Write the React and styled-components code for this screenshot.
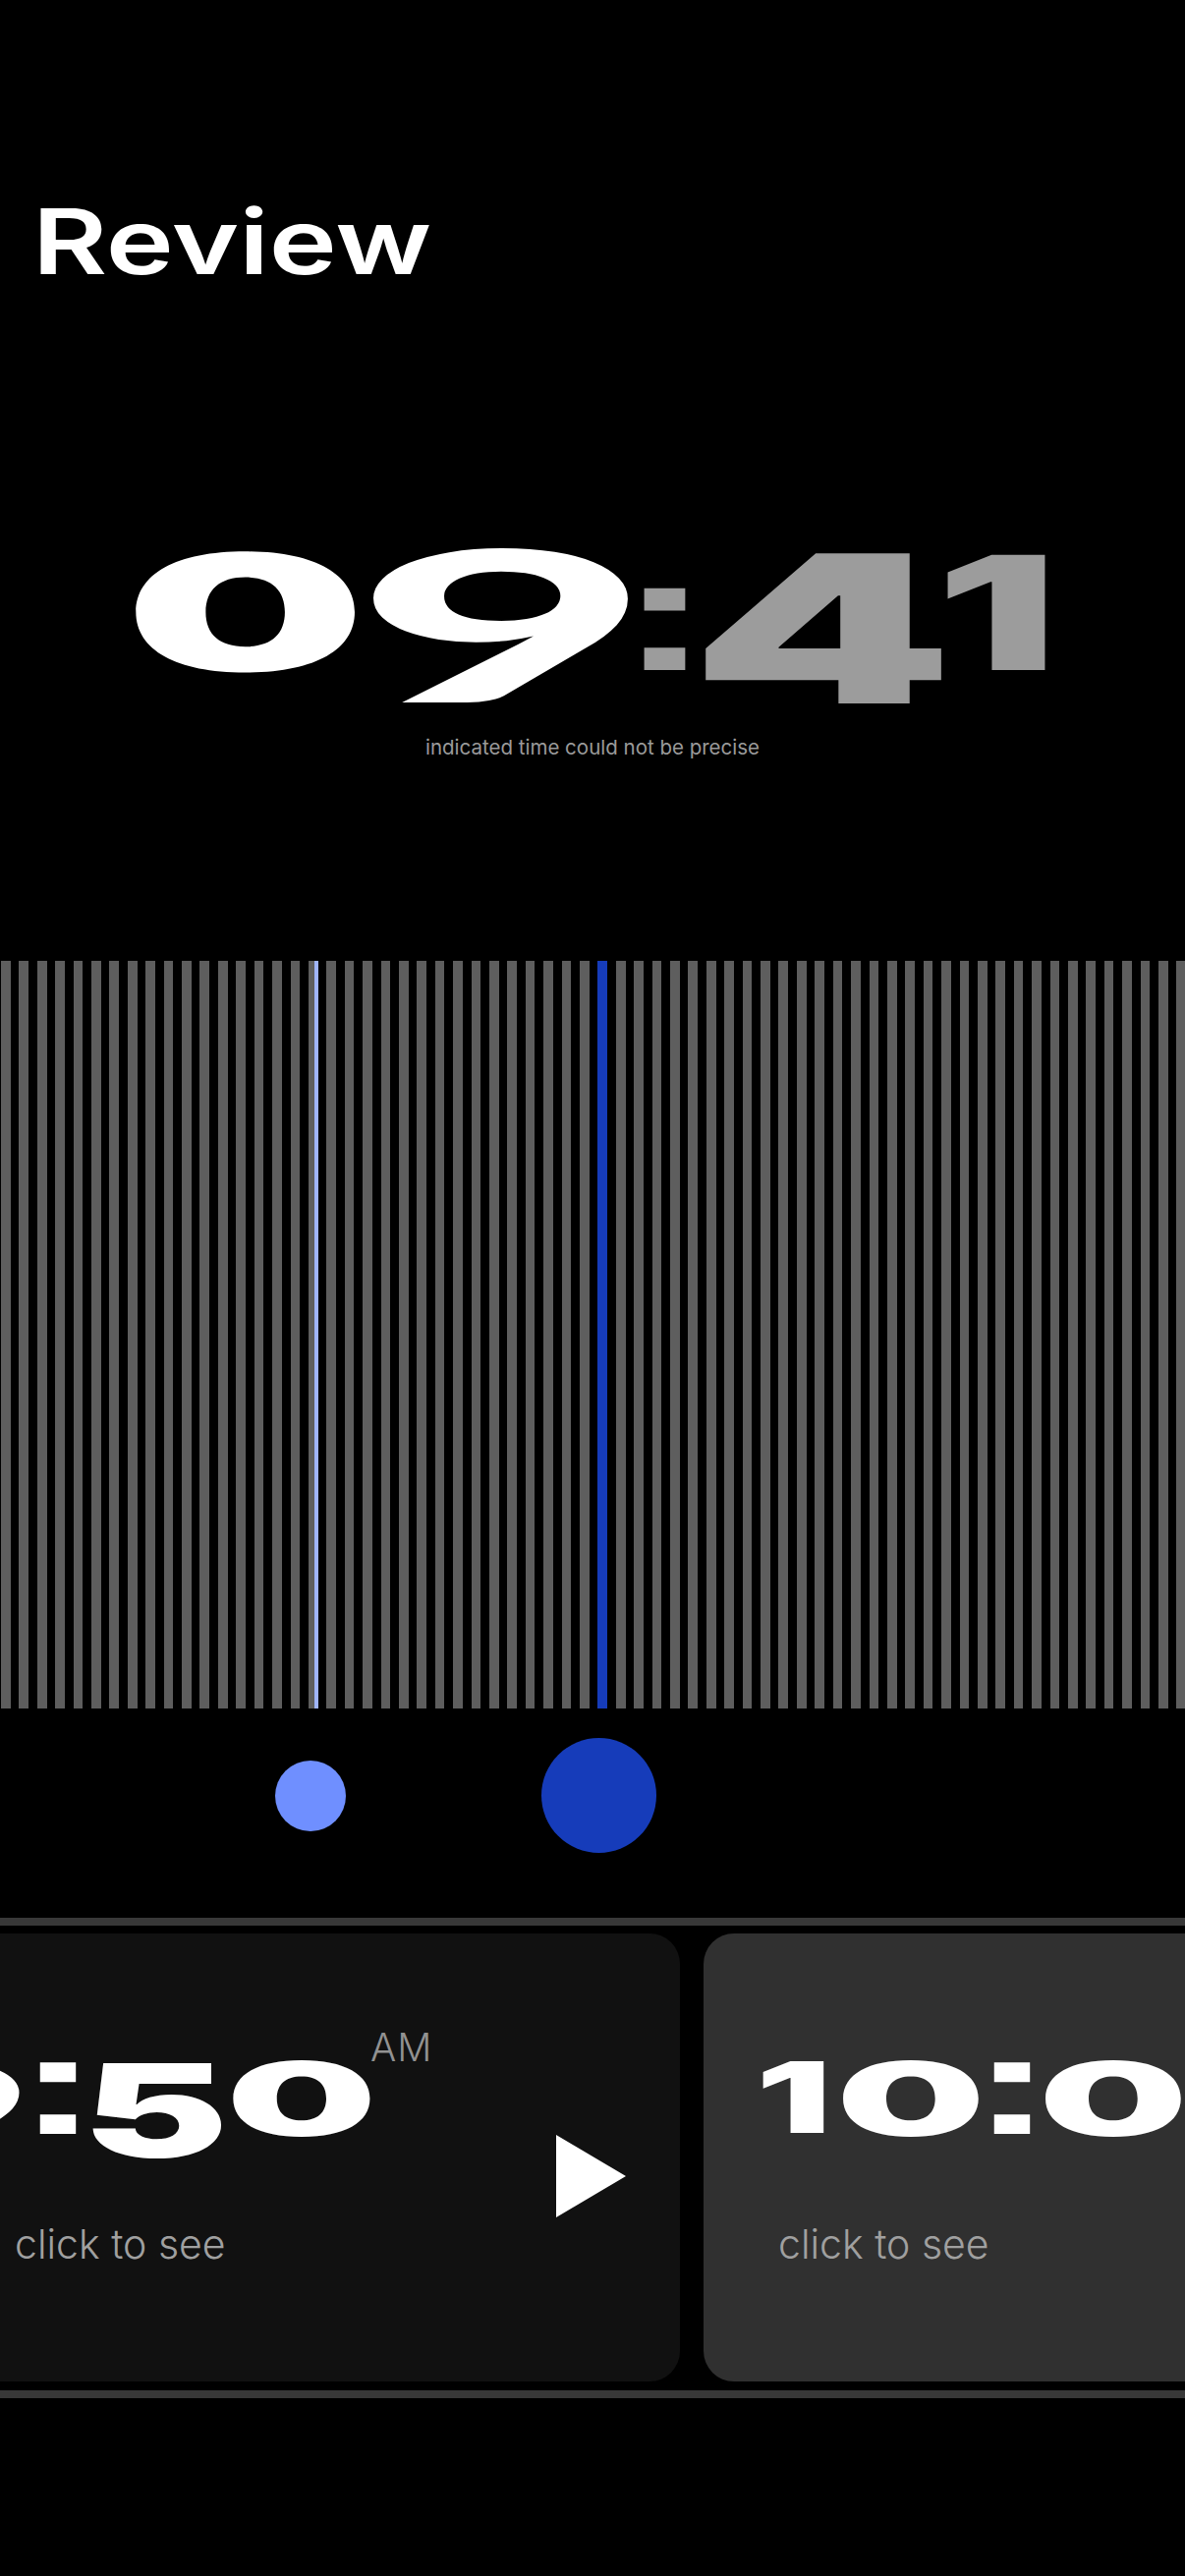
import React from "react";
import styled, { createGlobalStyle } from "styled-components";

const FONT = `Inter, "Liberation Sans", sans-serif`;
const COLON_FONT = `"Liberation Sans", Arial, sans-serif`;
const NINE_FONT = `Lato, Inter, sans-serif`;

const bars = Array.from({ length: 66 }, (_, i) => i);

const bigClock = [
  { ch: "0", left: 137, width: 226, size: 165, scale: 2.1, top: 1 },
  { ch: "9", left: 19, width: 260, size: 214, scale: 2.44, top: -14, font: NINE_FONT },
  { ch: ":", left: 12, width: 44, size: 165, scale: 1.8, top: 3, dim: true, font: COLON_FONT },
  { ch: "4", left: 18, width: 242, size: 210, scale: 1.82, top: -5, dim: true },
  { ch: "1", left: 4, width: 104, size: 161, scale: 1.7, top: 3, dim: true },
];

const morning = [
  { ch: "9", left: -146, width: 150, size: 130, scale: 2.4, top: 19, font: NINE_FONT },
  { ch: ":", left: 21, width: 38, size: 144, scale: 1.8, top: -9, font: COLON_FONT },
  { ch: "5", left: 12, width: 135, size: 132, scale: 1.7, top: 22 },
  { ch: "0", left: 11, width: 141, size: 104, scale: 2.08, top: 24 },
];

const late = [
  { ch: "1", left: -17, width: 65, size: 100, scale: 1.7, top: 25 },
  { ch: "0", left: 17, width: 139, size: 104, scale: 2.06, top: 24 },
  { ch: ":", left: 15, width: 38, size: 144, scale: 1.8, top: -9, font: COLON_FONT },
  { ch: "0", left: 14, width: 140, size: 104, scale: 2.06, top: 24 },
];

const Digits = ({ items }) =>
  items.map((d, i) => (
    <Cell key={i} $left={d.left} $width={d.width} $top={d.top}>
      <Ink $size={d.size} $scale={d.scale} $dim={d.dim} $font={d.font}>
        {d.ch}
      </Ink>
    </Cell>
  ));

const App = () => {
  return (
    <Page>
      <GlobalStyle />
      <Title>Review</Title>

      <ClockRow>
        <Digits items={bigClock} />
      </ClockRow>
      <Caption>indicated time could not be precise</Caption>

      <Bars>
        {bars.map((i) => (
          <Bar key={i} $kind={i === 17 ? "marker" : i === 33 ? "active" : ""} />
        ))}
      </Bars>

      <Dots>
        <Dot $size={72} $color="#6f8fff" />
        <Dot $size={117} $color="#163cba" />
      </Dots>

      <Rail $top={66} />
      <Cards>
        <Card $width={753} $bg="#111111">
          <CardBody>
            <TimeRow>
              <Digits items={morning} />
              <Meridiem>AM</Meridiem>
            </TimeRow>
            <Note>click to see</Note>
          </CardBody>
          <Play viewBox="0 0 71 84">
            <polygon points="0,0 71,42 0,84" fill="#fff" />
          </Play>
        </Card>
        <Card $width={760} $bg="#303030">
          <CardBody>
            <TimeRow>
              <Digits items={late} />
            </TimeRow>
            <Note>click to see</Note>
          </CardBody>
        </Card>
      </Cards>
      <Rail />
    </Page>
  );
};

export default App;

/* ================= styled-components ================= */

const GlobalStyle = createGlobalStyle`
  html, body {
    margin: 0;
    background: #000;
    overflow: hidden;
  }
`;

const Page = styled.div`
  width: 1206px;
  height: 2622px;
  padding-top: 200px;
  box-sizing: border-box;
  background: #000;
  font-family: ${FONT};
  overflow: hidden;
`;

const Title = styled.h1`
  margin: 0 0 0 33px;
  font-size: 92px;
  line-height: 1;
  font-weight: 600;
  color: #fff;
  transform: scaleX(1.27);
  transform-origin: left center;
`;

const ClockRow = styled.div`
  display: flex;
  align-items: flex-start;
  height: 200px;
  margin-top: 248px;
`;

const Cell = styled.div`
  flex: none;
  display: flex;
  justify-content: center;
  width: ${({ $width }) => $width}px;
  margin-left: ${({ $left }) => $left}px;
  margin-top: ${({ $top }) => $top}px;
`;

const Ink = styled.span`
  display: block;
  font-family: ${({ $font }) => $font || FONT};
  font-size: ${({ $size }) => $size}px;
  line-height: 1;
  font-weight: 900;
  color: ${({ $dim }) => ($dim ? "#9c9c9c" : "#fff")};
  transform: scaleX(${({ $scale }) => $scale});
`;

const Caption = styled.p`
  margin: 9px 0 0;
  text-align: center;
  font-size: 20.5px;
  line-height: 24px;
  color: #9a9a9a;
`;

const Bars = styled.div`
  display: flex;
  gap: 8.72px;
  height: 761px;
  margin-top: 205px;
  padding-left: 1px;
`;

const barFill = {
  marker: "linear-gradient(90deg, #5e5e5e 6px, #9fb4fb 6px)",
  active: "#163cba",
};

const Bar = styled.div`
  flex: none;
  width: 9.7px;
  background: ${({ $kind }) => barFill[$kind] || "#5e5e5e"};
`;

const Dots = styled.div`
  display: flex;
  align-items: center;
  gap: 199px;
  height: 117px;
  margin-top: 30px;
  padding-left: 280px;
`;

const Dot = styled.div`
  flex: none;
  width: ${({ $size }) => $size}px;
  height: ${({ $size }) => $size}px;
  border-radius: 50%;
  background: ${({ $color }) => $color};
`;

const Rail = styled.div`
  height: 8px;
  margin-top: ${({ $top }) => $top || 0}px;
  background: #383838;
`;

const Cards = styled.div`
  display: flex;
  gap: 24px;
  height: 456px;
  margin: 8px 0 9px -61px;
`;

const Card = styled.div`
  flex: none;
  display: flex;
  justify-content: space-between;
  width: ${({ $width }) => $width}px;
  padding-left: 76px;
  box-sizing: border-box;
  border-radius: 31px;
  background: ${({ $bg }) => $bg};
`;

const CardBody = styled.div`
  display: flex;
  flex-direction: column;
`;

const TimeRow = styled.div`
  display: flex;
  align-items: flex-start;
  height: 200px;
  margin-top: 92px;
`;

const Meridiem = styled.span`
  flex: none;
  margin-top: 4px;
  font-size: 39px;
  line-height: 1;
  font-weight: 300;
  letter-spacing: 1px;
  color: #929292;
`;

const Note = styled.div`
  margin-top: 1px;
  font-size: 41px;
  line-height: 46px;
  font-weight: 300;
  color: #a0a0a0;
  white-space: nowrap;
`;

const Play = styled.svg`
  flex: none;
  width: 71px;
  height: 84px;
  margin: 205px 55px 0 0;
`;
